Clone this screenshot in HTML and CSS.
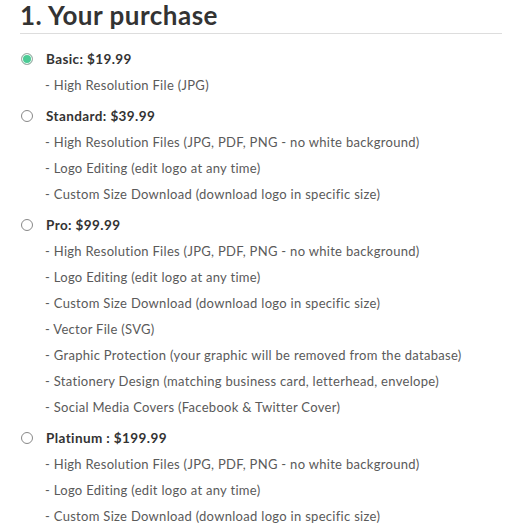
FILE: index.html
```html
<!DOCTYPE html>
<html>
<head>
<meta charset="utf-8">
<link rel="stylesheet" href="styles.css">
</head>
<body>
<div class="purchase">
  <h1 class="title">1. Your purchase</h1>
  <div class="option">
    <div class="option-head"><span class="radio checked"></span><span class="label">Basic: $19.99</span></div>
    <ul class="features">
      <li>- High Resolution File (JPG)</li>
    </ul>
  </div>
  <div class="option">
    <div class="option-head"><span class="radio"></span><span class="label">Standard: $39.99</span></div>
    <ul class="features">
      <li>- High Resolution Files (JPG, PDF, PNG - no white background)</li>
      <li>- Logo Editing (edit logo at any time)</li>
      <li>- Custom Size Download (download logo in specific size)</li>
    </ul>
  </div>
  <div class="option">
    <div class="option-head"><span class="radio"></span><span class="label">Pro: $99.99</span></div>
    <ul class="features">
      <li>- High Resolution Files (JPG, PDF, PNG - no white background)</li>
      <li>- Logo Editing (edit logo at any time)</li>
      <li>- Custom Size Download (download logo in specific size)</li>
      <li>- Vector File (SVG)</li>
      <li>- Graphic Protection (your graphic will be removed from the database)</li>
      <li>- Stationery Design (matching business card, letterhead, envelope)</li>
      <li>- Social Media Covers (Facebook &amp; Twitter Cover)</li>
    </ul>
  </div>
  <div class="option">
    <div class="option-head"><span class="radio"></span><span class="label">Platinum : $199.99</span></div>
    <ul class="features">
      <li>- High Resolution Files (JPG, PDF, PNG - no white background)</li>
      <li>- Logo Editing (edit logo at any time)</li>
      <li>- Custom Size Download (download logo in specific size)</li>
    </ul>
  </div>
</div>
</body>
</html>
```
FILE: styles.css
```css
html, body {
  margin: 0;
  padding: 0;
  background: #fff;
}
body {
  font-family: "Lato", "Liberation Sans", sans-serif;
}
.purchase {
  margin-left: 20px;
  width: 482px;
}
.title {
  margin: 0;
  font-size: 26px;
  font-weight: 700;
  letter-spacing: 0.5px;
  color: #333;
  line-height: 30px;
  padding-bottom: 3px;
  border-bottom: 1px solid #ddd;
  margin-bottom: 11px;
}
.option {
  margin-bottom: 4px;
}
.option-head {
  display: flex;
  align-items: center;
  height: 27px;
}
.radio {
  width: 10px;
  height: 10px;
  border: 1px solid #888;
  border-radius: 50%;
  margin-left: 1px;
  margin-right: 13px;
  box-sizing: content-box;
}
.radio.checked {
  border-color: #aaa;
  background: #4ccb95;
  box-shadow: inset 0 0 0 1px #fff;
}
.label {
  font-size: 13.5px;
  font-weight: 700;
  letter-spacing: 0.4px;
  color: #333;
}
.features {
  list-style: none;
  margin: 0;
  padding: 0 0 0 25px;
}
.features li {
  font-size: 13px;
  letter-spacing: 0.3px;
  color: #5a5a5a;
  line-height: 26px;
}
```
